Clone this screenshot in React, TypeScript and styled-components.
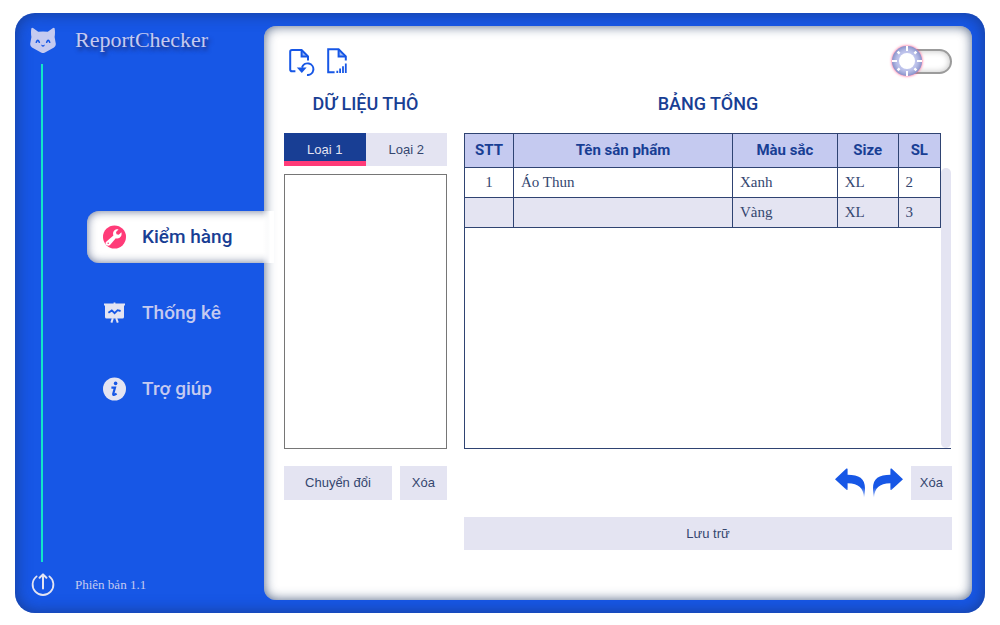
import React, { useState } from "react";
import styled, { createGlobalStyle, css } from "styled-components";

const color = {
  blue: "#1757e6",
  navy: "#183e94",
  ink: "#34466f",
  line: "#2f4372",
  lilac: "#c5caf0",
  mist: "#e4e4f2",
  pink: "#ff3b78",
  mint: "#12e6c8",
};

const serif = `"Liberation Serif", "Times New Roman", serif`;
const sans = `Roboto, "Liberation Sans", sans-serif`;
const controlFont = `"Liberation Sans", Arial, sans-serif`;

const GlobalStyle = createGlobalStyle`
  *, *::before, *::after { box-sizing: border-box; }
  body { margin: 0; background: #fff; font-family: ${serif}; color: ${color.ink}; }
  button { border: 0; padding: 0; background: none; cursor: pointer; }
  svg { display: block; }
`;

const Window = styled.div`
  display: flex;
  min-height: calc(100vh - 25px);
  margin: 13px 15px 12px;
  border-radius: 20px;
  background: ${color.blue};
  box-shadow: inset 0 0 16px rgba(24, 50, 110, 0.7);
`;

const Sidebar = styled.aside`
  display: flex;
  flex: 0 0 249px;
`;

const Rail = styled.div`
  display: flex;
  flex-direction: column;
  align-items: center;
  gap: 11px;
  flex: 0 0 54px;
  padding: 14px 0 16px;
`;

const RailLine = styled.span`
  flex: 1;
  width: 2px;
  background: ${color.mint};
`;

const SidebarBody = styled.div`
  display: flex;
  flex: 1;
  flex-direction: column;
  padding: 14px 0 16px 6px;
`;

const Brand = styled.h1`
  margin: 0;
  font-size: 22px;
  font-weight: 400;
  line-height: 26px;
  color: ${color.lilac};
  text-shadow: 2px 3px 4px #1c2a70;
`;

const Version = styled.p`
  margin: 0;
  font-size: 13px;
  line-height: 24px;
  color: ${color.lilac};
`;

const Nav = styled.nav`
  display: flex;
  flex: 1;
  flex-direction: column;
  justify-content: center;
  gap: 24px;
  padding-left: 12px;
`;

const NavItem = styled.a<{ $active?: boolean }>`
  position: relative;
  display: flex;
  align-items: center;
  gap: 16px;
  height: 52px;
  padding-left: 15px;
  border-radius: 12px 0 0 12px;
  font: 500 19px/24px ${sans};
  color: ${color.lilac};
  text-decoration: none;

  ${(p) =>
    p.$active &&
    css`
      margin-right: -10px;
      color: ${color.navy};
      background: #fff;
      box-shadow: inset 0 0 10px rgba(20, 40, 90, 0.65);

      &::after {
        content: "";
        position: absolute;
        inset: 0 0 0 auto;
        width: 12px;
        background: linear-gradient(to right, transparent, #fff 8px);
      }
    `}
`;

const Panel = styled.main`
  display: flex;
  flex: 1;
  flex-direction: column;
  min-width: 0;
  margin: 13px 13px 13px 0;
  padding: 20px 20px 50px;
  border-radius: 12px;
  background: #fff;
  box-shadow: inset 0 0 12px rgba(20, 45, 90, 0.75);
`;

const Toolbar = styled.div`
  display: flex;
  align-items: center;
  gap: 11px;
  height: 30px;
  padding-left: 4px;
`;

const IconButton = styled.button`
  display: flex;
`;

const Switch = styled.label`
  position: relative;
  display: flex;
  align-items: center;
  width: 60px;
  height: 30px;
  margin-left: auto;
  cursor: pointer;
`;

const SwitchInput = styled.input`
  position: absolute;
  inset: 0;
  margin: 0;
  opacity: 0;
`;

const SwitchTrack = styled.span`
  flex: 1;
  height: 25px;
  margin-left: 3px;
  border: 2px solid #9b9b9b;
  border-radius: 13px;
  box-shadow: inset 0 0 6px rgba(0, 0, 0, 0.25);
`;

const SwitchKnob = styled.span<{ $on: boolean }>`
  position: absolute;
  top: 0;
  left: ${(p) => (p.$on ? "30px" : "0")};
  border-radius: 50%;
  background: ${color.lilac};
  box-shadow: 0 0 3px ${color.pink}, inset 0 0 7px #5663a8;
`;

const Columns = styled.div`
  display: grid;
  flex: 1;
  grid-template-columns: minmax(0, 163fr) minmax(0, 488fr);
  gap: 17px;
  padding-top: 16px;
`;

const Column = styled.section`
  display: flex;
  flex-direction: column;
`;

const Heading = styled.h2`
  margin: 0 0 17px;
  font: 500 18px/24px ${sans};
  text-align: center;
  color: ${color.navy};
`;

const Tabs = styled.div`
  display: flex;
  margin-bottom: 8px;
`;

const Tab = styled.button<{ $active: boolean }>`
  flex: 1;
  height: 33px;
  font: 400 13px/16px ${controlFont};
  color: ${(p) => (p.$active ? color.mist : color.ink)};
  background: ${(p) => (p.$active ? color.navy : color.mist)};
  box-shadow: ${(p) => (p.$active ? `inset 0 -5px ${color.pink}` : "none")};
`;

const RawInput = styled.textarea`
  flex: 1;
  width: 100%;
  min-height: 200px;
  border: 1px solid #767676;
  resize: none;
  font: 15px/20px ${serif};
  color: ${color.ink};
`;

const Actions = styled.div<{ $end?: boolean }>`
  display: flex;
  align-items: center;
  justify-content: ${(p) => (p.$end ? "flex-end" : "flex-start")};
  gap: 8px;
  margin: 17px 0;
`;

const Button = styled.button<{ $grow?: boolean; $narrow?: boolean }>`
  flex: ${(p) => (p.$grow ? "1" : "none")};
  height: 34px;
  padding: 0 ${(p) => (p.$narrow ? "9px" : "12px")};
  font: 400 13px/16px ${controlFont};
  color: ${color.ink};
  background: ${color.mist};
`;

const FooterSlot = styled.div`
  display: flex;
  height: 33px;
`;

const SaveButton = styled(Button)`
  height: 33px;
`;

const TableBox = styled.div`
  display: flex;
  flex: 1;
  align-items: stretch;
  margin-right: 1px;
  border: solid ${color.line};
  border-width: 0 0 1px 1px;
`;

const TableArea = styled.div`
  flex: 1;
  margin-left: -1px;
`;

const ScrollThumb = styled.span`
  width: 10px;
  margin-top: 35px;
  border-radius: 5px;
  background: ${color.mist};
`;

const Table = styled.table`
  width: 100%;
  border-collapse: collapse;
  table-layout: fixed;

  th, td { border: 1px solid ${color.line}; }
  th {
    height: 34px;
    padding: 0 0 2px;
    font: 700 15px/20px ${sans};
    color: ${color.navy};
    background: ${color.lilac};
  }
  td {
    height: 30px;
    padding: 0 7px 2px;
    font-size: 15px;
    line-height: 20px;
  }
  td:first-child { text-align: center; }
  tbody tr:nth-child(even) { background: ${color.mist}; }
`;

const CatIcon = () => (
  <svg width="28" height="26" viewBox="-2 0 28 26" aria-hidden="true">
    <path
      fill={color.lilac}
      d="M1.4 1.2Q2 .2 3.4 1.2L8.2 4.8Q13 4 17.8 4.8L22.6 1.2Q24 .2 24.6 1.2Q25.4 5 24.6 10L25.8 16.8Q26 19 24 20.4L15 25.6Q13 26.6 11 25.6L2 20.4Q0 19 .2 16.8L1.4 10Q.6 5 1.4 1.2Z"
    />
    <g fill="none" stroke={color.blue} strokeWidth="1.6" strokeLinecap="round">
      <path d="M6.3 15.2Q7.8 11.6 9.3 15.2M16.7 15.2Q18.2 11.6 19.7 15.2" />
    </g>
    <path fill={color.blue} d="M11 17.6Q13 18.8 15 17.6Q14.4 19.8 13 19.8Q11.6 19.8 11 17.6Z" />
  </svg>
);

const PowerIcon = () => (
  <svg width="26" height="24" viewBox="-2 0 26 24" fill="none" stroke={color.mist} strokeWidth="1.8" strokeLinecap="round" strokeLinejoin="round" aria-hidden="true">
    <path d="M5.6 3.4A10.4 10.4 0 1 0 18.4 3.4" />
    <path d="M12 15.6V1.8M8.6 4.8L12 1.4L15.4 4.8" strokeWidth="2" />
  </svg>
);

const WrenchIcon = () => (
  <svg width="24" height="24" viewBox="0 0 24 24" aria-hidden="true">
    <circle cx="12.5" cy="12" r="11.5" fill={color.pink} />
    <path
      fill="#fff"
      d="M19.4 7.3L16.7 9.8L14.5 9.2L14 7.1L16.5 4.5C13.7 3.8 10.9 5.9 11.1 9C11.1 9.6 11.2 10.1 11.4 10.6L4.2 16.7C3.2 17.8 3.4 19.2 4.4 20.1C5.4 21 7 21.1 8 20.1L13.8 13.2C17.4 14.4 20.5 11.2 19.4 7.3Z"
    />
    <circle cx="6.2" cy="18.2" r="0.8" fill={color.pink} />
  </svg>
);

const BoardIcon = () => (
  <svg width="24" height="24" viewBox="0 0 24 24" aria-hidden="true">
    <path fill={color.mist} d="M2 2.4H11.6V1.6H13.4V2.4H23V4.6H22V16Q22 17.6 20.4 17.6H4.6Q3 17.6 3 16V4.6H2Z" />
    <path d="M6.4 11.8L9.8 9.4L12.6 12.2L15.6 9.2L18.6 10" fill="none" stroke={color.blue} strokeWidth="1.9" />
    <path d="M10.8 17.2L9.4 21.6M14.2 17.2L15.8 21.6" stroke={color.mist} strokeWidth="2" />
  </svg>
);

const InfoIcon = () => (
  <svg width="24" height="24" viewBox="0 0 24 24" aria-hidden="true">
    <circle cx="12.5" cy="12" r="11.5" fill={color.mist} />
    <circle cx="13.6" cy="6.4" r="1.8" fill={color.blue} />
    <path d="M9.4 10.6H13L11.2 17Q11 19 14.6 16.6" fill="none" stroke={color.blue} strokeWidth="2.2" />
  </svg>
);

const DocBack = () => (
  <svg width="27" height="30" viewBox="0 0 27 30" fill="none" stroke={color.blue} strokeWidth="2" aria-hidden="true">
    <path d="M7.4 25.2H4Q2.2 25.2 2.2 23.4V5.8Q2.2 4 4 4H13.6L20 10.4V14.4" />
    <path d="M13.6 4V10.6H20" />
    <path d="M13.6 4L20 10.6H13.6Z" fill={color.blue} fillOpacity="0.4" stroke="none" />
    <path d="M14 21.6A5.8 5.8 0 1 1 19 29" />
    <path d="M8.8 21.4H18.6L13.8 27Z" fill={color.blue} stroke="none" />
  </svg>
);

const DocChart = () => (
  <svg width="22" height="30" viewBox="0 0 22 30" fill="none" stroke={color.blue} strokeWidth="2" aria-hidden="true">
    <path d="M8.6 26.2H2.2V3.2H12.6L19.8 10.4V14.4" />
    <path d="M12.6 3.2V10.4H19.8" />
    <path d="M12.6 3.2L19.8 10.4H12.6Z" fill={color.blue} fillOpacity="0.4" stroke="none" />
    <path d="M11.3 24.8V27M14.1 22.4V27M17 20.2V27M19.8 17.6V27" strokeWidth="1.8" />
  </svg>
);

const SunIcon = () => (
  <svg width="30" height="30" viewBox="0 0 30 30" stroke="#fff" strokeWidth="2" aria-hidden="true">
    <circle cx="15" cy="15" r="8" fill="#fff" stroke="none" />
    <path d="M15 0V5M15 25V30M0 15H5M25 15H30" />
    <path d="M5.6 5.6L7.6 7.6M22.4 22.4L24.4 24.4M24.4 5.6L22.4 7.6M7.6 22.4L5.6 24.4" strokeWidth="2.4" />
  </svg>
);

const ArrowIcon = ({ flip }: { flip?: boolean }) => (
  <svg width="30" height="30" viewBox="0 0 30 30" aria-hidden="true">
    <defs>
      <linearGradient id={flip ? "fade-r" : "fade-l"} x1="0" y1="0" x2="0" y2="1">
        <stop offset="0.65" stopColor={color.blue} />
        <stop offset="1" stopColor={color.blue} stopOpacity="0.2" />
      </linearGradient>
    </defs>
    <path
      transform={flip ? "matrix(-1 0 0 1 30 0)" : undefined}
      fill={`url(#${flip ? "fade-r" : "fade-l"})`}
      d="M0 11.2L11.4.6Q12.6 0 12.6 1.2V6.8C24 6.8 30 10.5 30 20.5C30 24 29.7 27 29 29.6C28.4 20.5 24 15.2 12.6 15.2V21.2Q12.6 22.6 11.4 21.8Z"
    />
  </svg>
);

const rows = [
  ["1", "Áo Thun", "Xanh", "XL", "2"],
  ["", "", "Vàng", "XL", "3"],
];

export default function App() {
  const [tab, setTab] = useState(0);
  const [dark, setDark] = useState(false);

  return (
    <>
      <GlobalStyle />
      <Window>
        <Sidebar>
          <Rail>
            <CatIcon />
            <RailLine />
            <IconButton aria-label="Thoát">
              <PowerIcon />
            </IconButton>
          </Rail>
          <SidebarBody>
            <Brand>ReportChecker</Brand>
            <Nav>
              <NavItem href="#kiem-hang" $active>
                <WrenchIcon />
                Kiểm hàng
              </NavItem>
              <NavItem href="#thong-ke">
                <BoardIcon />
                Thống kê
              </NavItem>
              <NavItem href="#tro-giup">
                <InfoIcon />
                Trợ giúp
              </NavItem>
            </Nav>
            <Version>Phiên bản 1.1</Version>
          </SidebarBody>
        </Sidebar>

        <Panel>
          <Toolbar>
            <IconButton aria-label="Khôi phục">
              <DocBack />
            </IconButton>
            <IconButton aria-label="Báo cáo">
              <DocChart />
            </IconButton>
            <Switch>
              <SwitchInput
                type="checkbox"
                aria-label="Giao diện tối"
                checked={dark}
                onChange={(e) => setDark(e.target.checked)}
              />
              <SwitchTrack />
              <SwitchKnob $on={dark}>
                <SunIcon />
              </SwitchKnob>
            </Switch>
          </Toolbar>

          <Columns>
            <Column>
              <Heading id="raw-title">DỮ LIỆU THÔ</Heading>
              <Tabs role="tablist">
                {["Loại 1", "Loại 2"].map((label, i) => (
                  <Tab key={label} role="tab" aria-selected={tab === i} $active={tab === i} onClick={() => setTab(i)}>
                    {label}
                  </Tab>
                ))}
              </Tabs>
              <RawInput aria-labelledby="raw-title" />
              <Actions>
                <Button $grow>Chuyển đổi</Button>
                <Button>Xóa</Button>
              </Actions>
              <FooterSlot />
            </Column>

            <Column>
              <Heading>BẢNG TỔNG</Heading>
              <TableBox>
                <TableArea>
                  <Table>
                    <colgroup>
                      <col style={{ width: "10.3%" }} />
                      <col style={{ width: "46%" }} />
                      <col style={{ width: "22%" }} />
                      <col style={{ width: "12.8%" }} />
                      <col />
                    </colgroup>
                    <thead>
                      <tr>
                        <th>STT</th>
                        <th>Tên sản phẩm</th>
                        <th>Màu sắc</th>
                        <th>Size</th>
                        <th>SL</th>
                      </tr>
                    </thead>
                    <tbody>
                      {rows.map((row, r) => (
                        <tr key={r}>
                          {row.map((cell, c) => (
                            <td key={c}>{cell}</td>
                          ))}
                        </tr>
                      ))}
                    </tbody>
                  </Table>
                </TableArea>
                <ScrollThumb />
              </TableBox>
              <Actions $end>
                <IconButton aria-label="Hoàn tác">
                  <ArrowIcon />
                </IconButton>
                <IconButton aria-label="Làm lại">
                  <ArrowIcon flip />
                </IconButton>
                <Button $narrow>Xóa</Button>
              </Actions>
              <FooterSlot>
                <SaveButton $grow>Lưu trữ</SaveButton>
              </FooterSlot>
            </Column>
          </Columns>
        </Panel>
      </Window>
    </>
  );
}
